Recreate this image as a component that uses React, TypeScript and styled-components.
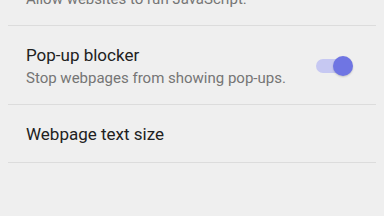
import React, { useState } from 'react';
import styled, { createGlobalStyle } from 'styled-components';

const GlobalStyle = createGlobalStyle`
  *, *::before, *::after {
    box-sizing: border-box;
  }
  html, body {
    margin: 0;
    padding: 0;
    background: #efefef;
    overflow: hidden;
  }
  body {
    font-family: Roboto, "Noto Sans", sans-serif;
    -webkit-font-smoothing: antialiased;
  }
`;

const Screen = styled.div`
  width: 384px;
  height: 216px;
  overflow: hidden;
  background: #efefef;
`;

// the list is scrolled, so the first preference is partly above the top edge
const List = styled.div`
  margin: -52px 8px 0;
  display: flex;
  flex-direction: column;
`;

const Row = styled.div<{ $height: number }>`
  height: ${(p) => p.$height}px;
  display: flex;
  align-items: center;
  padding: 1px 23px 0 18px;
  border-bottom: 1px solid #dcdcdc;
`;

const Text = styled.div`
  flex: 1;
  display: flex;
  flex-direction: column;
  min-width: 0;
`;

const Title = styled.div`
  font-size: 17px;
  line-height: 22px;
  color: #212121;
`;

const Summary = styled.div`
  margin-top: 2px;
  font-size: 15px;
  line-height: 20px;
  color: #757575;
`;

const Track = styled.button<{ $on: boolean }>`
  position: relative;
  width: 34px;
  height: 14px;
  margin-right: 3px;
  padding: 0;
  border: none;
  border-radius: 7px;
  background: ${(p) => (p.$on ? '#c6c8f2' : '#bdbdbd')};
  cursor: pointer;
  outline: none;
`;

const Thumb = styled.span<{ $on: boolean }>`
  position: absolute;
  top: -3px;
  left: ${(p) => (p.$on ? '17px' : '-3px')};
  width: 20px;
  height: 20px;
  border-radius: 50%;
  background: ${(p) => (p.$on ? '#6f75e3' : '#fafafa')};
  box-shadow: 0 1px 2px rgba(0, 0, 0, 0.18);
  transition: left 0.15s ease;
`;

const Switch: React.FC<{ on: boolean; onToggle: () => void }> = ({ on, onToggle }) => (
  <Track $on={on} onClick={onToggle} aria-pressed={on}>
    <Thumb $on={on} />
  </Track>
);

export default function App() {
  const [popups, setPopups] = useState(true);

  return (
    <Screen>
      <GlobalStyle />
      <List>
        <Row $height={78}>
          <Text>
            <Title>JavaScript</Title>
            <Summary>Allow websites to run JavaScript.</Summary>
          </Text>
        </Row>
        <Row $height={79}>
          <Text>
            <Title>Pop-up blocker</Title>
            <Summary>Stop webpages from showing pop-ups.</Summary>
          </Text>
          <Switch on={popups} onToggle={() => setPopups(!popups)} />
        </Row>
        <Row $height={58}>
          <Text>
            <Title>Webpage text size</Title>
          </Text>
        </Row>
      </List>
    </Screen>
  );
}
